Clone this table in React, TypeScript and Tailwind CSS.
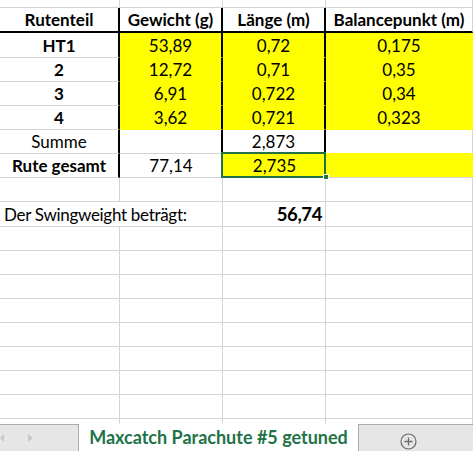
import type { ReactNode } from 'react'

// Zeilen der Tabelle (Rutenteile)
const parts = [
  { name: 'HT1', weight: '53,89', length: '0,72', balance: '0,175' },
  { name: '2', weight: '12,72', length: '0,71', balance: '0,35' },
  { name: '3', weight: '6,91', length: '0,722', balance: '0,34' },
  { name: '4', weight: '3,62', length: '0,721', balance: '0,323' },
]

const emptyRows = [0, 1, 2, 3, 4, 5, 6, 7]

function Cell({ className, children }: { className: string; children?: ReactNode }) {
  return (
    <div className={`box-border flex items-center justify-center whitespace-nowrap border-r border-b ${className}`}>
      {children}
    </div>
  )
}

export default function App() {
  return (
    <div
      className="w-[473px] h-[451px] overflow-hidden bg-white flex flex-col text-black"
      style={{ fontFamily: 'Lato, "Liberation Sans", sans-serif' }}
    >
      <div className="h-[424px] overflow-hidden">
        <div className="grid grid-cols-[120px_103px_103px_147px] text-[17px] leading-none">
          {/* angeschnittene Zeile oben */}
          <Cell className="h-[8px] border-[#d4d4d4]" />
          <Cell className="h-[8px] border-[#d4d4d4]" />
          <Cell className="h-[8px] border-[#d4d4d4]" />
          <Cell className="h-[8px] border-[#d4d4d4]" />

          {/* Kopfzeile */}
          <Cell className="h-[25px] font-bold border-r-2 border-b-2 border-black">Rutenteil</Cell>
          <Cell className="h-[25px] font-bold border-r-2 border-b-2 border-black">Gewicht (g)</Cell>
          <Cell className="h-[25px] font-bold border-r-2 border-b-2 border-black">Länge (m)</Cell>
          <Cell className="h-[25px] font-bold border-b-2 border-b-black border-r-[#d4d4d4]">Balancepunkt (m)</Cell>

          {parts.map((p, i) => (
            <div key={p.name} className="contents">
              <Cell className={`${i === 0 ? 'h-[25px]' : 'h-[24px]'} font-bold border-r-2 border-r-black border-b-[#d4d4d4]`}>
                {p.name}
              </Cell>
              <Cell className={`${i === 0 ? 'h-[25px]' : 'h-[24px]'} bg-[#ffff00] border-r-2 border-r-black border-b-[#ffff00]`}>
                {p.weight}
              </Cell>
              <Cell className={`${i === 0 ? 'h-[25px]' : 'h-[24px]'} bg-[#ffff00] border-r-2 border-r-black border-b-[#ffff00]`}>
                {p.length}
              </Cell>
              <Cell className={`${i === 0 ? 'h-[25px]' : 'h-[24px]'} bg-[#ffff00] border-[#ffff00]`}>{p.balance}</Cell>
            </div>
          ))}

          {/* Summe */}
          <Cell className="h-[24px] border-r-2 border-r-black border-b-[#d4d4d4]">Summe</Cell>
          <Cell className="h-[24px] border-r-2 border-r-black border-b-[#d4d4d4]" />
          <Cell className="h-[24px] border-r-2 border-r-black border-b-[#d4d4d4]">2,873</Cell>
          <Cell className="h-[24px] border-r-[#d4d4d4] border-b-[#ffff00]" />

          {/* Rute gesamt */}
          <Cell className="h-[24px] font-bold border-r-2 border-r-black border-b-[#d4d4d4]">Rute gesamt</Cell>
          <Cell className="h-[24px] border-[#d4d4d4]">77,14</Cell>
          <div className="relative box-border h-[24px] flex items-center justify-center bg-[#ffff00] border-b border-[#d4d4d4]">
            2,735
            <div className="absolute -left-[2px] -top-[2px] w-[105px] h-[26px] border-2 border-[#217346]" />
            <div className="absolute -right-[3px] -bottom-[3px] w-[6px] h-[6px] bg-[#217346] border border-white" />
          </div>
          <Cell className="h-[24px] bg-[#ffff00] border-r-[#ffff00] border-b-[#d4d4d4]" />

          {/* Leerzeile */}
          <Cell className="h-[24px] border-[#d4d4d4]" />
          <Cell className="h-[24px] border-[#d4d4d4]" />
          <Cell className="h-[24px] border-[#d4d4d4]" />
          <Cell className="h-[24px] border-[#d4d4d4]" />

          {/* Swingweight */}
          <div className="box-border h-[25px] flex items-center pl-[4px] whitespace-nowrap tracking-[-0.3px] border-b border-[#d4d4d4]">
            Der Swingweight beträgt:
          </div>
          <Cell className="h-[25px] border-[#d4d4d4]" />
          <Cell className="h-[25px] !justify-end pr-[3px] font-bold text-[18.5px] tracking-[-0.4px] border-[#d4d4d4]">56,74</Cell>
          <Cell className="h-[25px] border-[#d4d4d4]" />

          {emptyRows.map((r) => (
            <div key={r} className="contents">
              <Cell className="h-[24px] border-[#d4d4d4]" />
              <Cell className="h-[24px] border-[#d4d4d4]" />
              <Cell className="h-[24px] border-[#d4d4d4]" />
              <Cell className="h-[24px] border-[#d4d4d4]" />
            </div>
          ))}

          <Cell className="h-[8px] border-[#d4d4d4]" />
          <Cell className="h-[8px] border-[#d4d4d4]" />
          <Cell className="h-[8px] border-[#d4d4d4]" />
          <Cell className="h-[8px] border-[#d4d4d4]" />
        </div>
      </div>

      {/* Blattregister */}
      <div className="h-[27px] flex">
        <div className="box-border w-[79px] bg-[#e6e6e6] border-t border-r border-[#ababab] flex items-center">
          <svg width="4" height="10" viewBox="0 0 4 10" className="ml-0">
            <path d="M4 1 L0 5 L4 9 Z" fill="#c8c8c8" />
          </svg>
          <svg width="5" height="10" viewBox="0 0 5 10" className="ml-[24px]">
            <path d="M0 1 L5 5 L0 9 Z" fill="#c8c8c8" />
          </svg>
        </div>
        <div className="w-[279px] bg-white flex items-center justify-center text-[18px] font-bold text-[#217346]">
          Maxcatch Parachute #5 getuned
        </div>
        <div className="box-border flex-1 bg-[#e6e6e6] border-t border-l border-[#ababab] flex items-center pl-[41px] pt-[7px]">
          <svg width="17" height="17" viewBox="0 0 17 17">
            <circle cx="8.5" cy="8.5" r="7.5" fill="none" stroke="#6b6b6b" strokeWidth="1.2" />
            <path d="M8.5 4.5 V12.5 M4.5 8.5 H12.5" stroke="#6b6b6b" strokeWidth="1.3" />
          </svg>
        </div>
      </div>
    </div>
  )
}
